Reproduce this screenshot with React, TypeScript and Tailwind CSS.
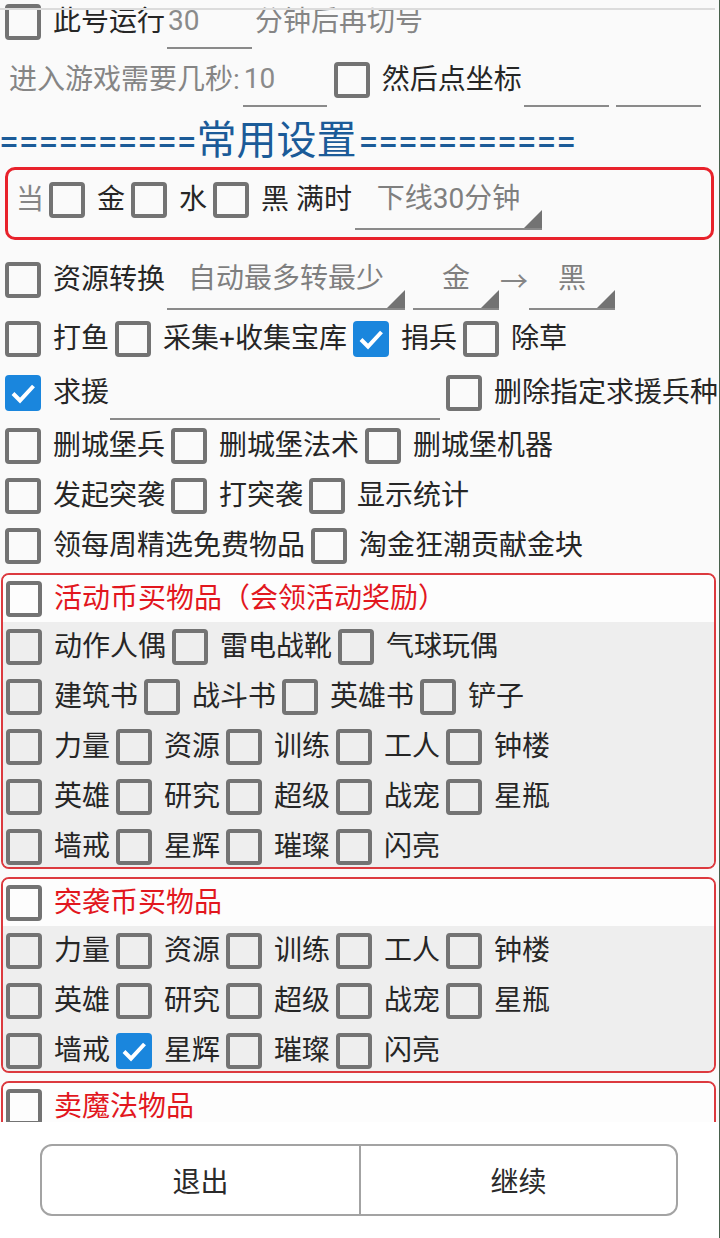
import React from "react";

function Cb({ checked = false, ml = "ml-[6px]" }: { checked?: boolean; ml?: string }) {
  if (checked) {
    return (
      <span className={`${ml} w-[36px] h-[36px] shrink-0 rounded-[4px] bg-[#1a86dd] flex items-center justify-center`}>
        <svg width="36" height="36" viewBox="0 0 36 36">
          <path d="M8 18.5 L15 25.5 L28.5 11" fill="none" stroke="#ffffff" strokeWidth="4" />
        </svg>
      </span>
    );
  }
  return <span className={`${ml} w-[36px] h-[36px] shrink-0 rounded-[4px] border-[4px] border-[#737373] box-border`} />;
}

function Item({ label, checked = false, red = false }: { label: string; checked?: boolean; red?: boolean }) {
  return (
    <div className="flex items-center shrink-0">
      <Cb checked={checked} />
      <span className={`ml-[12px] text-[28px] whitespace-nowrap ${red ? "text-[#e2171e]" : "text-[#262626]"}`}>{label}</span>
    </div>
  );
}

function Edit({ value = "", cls }: { value?: string; cls: string }) {
  return (
    <div className={`h-[54px] shrink-0 border-b-2 border-[#8a8a8a] flex items-center text-[28px] text-[#8a8a8a] ${cls}`}>
      <span className="pl-[1px]">{value}</span>
    </div>
  );
}

function Spinner({ text, cls }: { text: string; cls: string }) {
  return (
    <div className={`relative h-[60px] shrink-0 border-b-2 border-[#8a8a8a] flex items-center justify-center text-[28px] text-[#7f7f7f] whitespace-nowrap ${cls}`}>
      <span>{text}</span>
      <svg className="absolute right-0 bottom-0" width="18" height="18" viewBox="0 0 18 18">
        <polygon points="18,0 18,18 0,18" fill="#737373" />
      </svg>
    </div>
  );
}

function Row({ children, cls = "h-[50px]" }: { children: React.ReactNode; cls?: string }) {
  return <div className={`flex items-center whitespace-nowrap ${cls}`}>{children}</div>;
}

function Section({ title, rows, cls }: { title: string; rows: { label: string; checked?: boolean }[][]; cls: string }) {
  return (
    <div className={`ml-[1px] mr-[3px] border-2 border-[#dc3a3f] rounded-[8px] overflow-hidden shrink-0 ${cls}`}>
      <div className="h-[47px] bg-[#fdfdfd] flex items-center ml-[-3px]">
        <Item label={title} red />
      </div>
      {rows.map((r, i) => (
        <div key={i} className="h-[50px] bg-[#eeeeee] flex items-center ml-[-3px] whitespace-nowrap">
          {r.map((it, j) => (
            <Item key={j} label={it.label} checked={it.checked} />
          ))}
        </div>
      ))}
    </div>
  );
}

const five = (labels: string[], checkedIdx: number = -1) => labels.map((l, i) => ({ label: l, checked: i === checkedIdx }));

export default function App() {
  return (
    <div className="w-[720px] h-[1238px] flex bg-[#fafafa] overflow-hidden font-[Roboto,'Noto_Sans_CJK_SC',sans-serif] leading-none">
      <div className="relative w-[719px] h-full flex flex-col">
        <div className="absolute left-0 top-[8px] h-[2px] w-[715px] bg-[#dcdcdc] z-10" />
        <div className="h-[1122px] shrink-0 overflow-hidden flex flex-col">
          {/* row 1 */}
          <Row cls="h-[58px] mt-[-7px] shrink-0 ml-[-1px]">
            <Cb />
            <span className="ml-[12px] text-[28px] text-[#262626]">此号运行</span>
            <Edit value="30" cls="ml-[2px] w-[85px]" />
            <span className="ml-[3px] text-[28px] text-[#858585]">分钟后再切号</span>
          </Row>
          {/* row 2 */}
          <Row cls="h-[58px] shrink-0">
            <span className="ml-[9px] text-[28px] text-[#858585]">进入游戏需要几秒:</span>
            <Edit value="10" cls="ml-[3px] w-[84px]" />
            <Cb ml="ml-[7px]" />
            <span className="ml-[12px] text-[28px] text-[#262626]">然后点坐标</span>
            <Edit cls="ml-[2px] w-[85px]" />
            <Edit cls="ml-[7px] w-[85px]" />
          </Row>
          {/* title */}
          <div className="h-[58px] shrink-0 flex items-baseline pt-[8px] ml-[-1px] text-[#1b5b98] whitespace-nowrap">
            <span className="text-[36px] font-[Roboto]">==========</span>
            <span className="text-[40px] font-['Noto_Sans_CJK_SC']">常用设置</span>
            <span className="ml-[2px] text-[36px] font-[Roboto]">===========</span>
          </div>
          {/* red box */}
          <div className="h-[73px] shrink-0 ml-[5px] mr-[5px] border-[3px] border-[#e8222b] rounded-[10px] flex items-center pb-[7px] whitespace-nowrap">
            <span className="ml-[8px] text-[28px] text-[#858585]">当</span>
            <Cb ml="ml-[5px]" />
            <span className="ml-[12px] text-[28px] text-[#262626]">金</span>
            <Cb ml="ml-[6px]" />
            <span className="ml-[12px] text-[28px] text-[#262626]">水</span>
            <Cb ml="ml-[6px]" />
            <span className="ml-[12px] text-[28px] text-[#262626]">黑 满时</span>
            <Spinner text="下线30分钟" cls="ml-[3px] w-[187px]" />
          </div>
          {/* resource */}
          <Row cls="h-[60px] mt-[10px] shrink-0 ml-[-1px]">
            <Cb />
            <span className="ml-[12px] text-[28px] text-[#262626]">资源转换</span>
            <Spinner text="自动最多转最少" cls="ml-[2px] w-[238px]" />
            <Spinner text="金" cls="ml-[8px] w-[86px]" />
            <span className="ml-[1px] w-[28px] text-[28px] text-[#858585] mt-[6px]">→</span>
            <Spinner text="黑" cls="ml-[1px] w-[86px]" />
          </Row>
          <Row cls="h-[50px] mt-[4px] shrink-0 ml-[-1px]">
            <Item label="打鱼" />
            <Item label="采集+收集宝库" />
            <Item label="捐兵" checked />
            <Item label="除草" />
          </Row>
          <Row cls="h-[57px] shrink-0 ml-[-1px]">
            <Item label="求援" checked />
            <Edit cls="ml-[1px] w-[330px]" />
            <Item label="删除指定求援兵种" />
          </Row>
          <Row cls="h-[50px] shrink-0 ml-[-1px]">
            <Item label="删城堡兵" />
            <Item label="删城堡法术" />
            <Item label="删城堡机器" />
          </Row>
          <Row cls="h-[50px] shrink-0 ml-[-1px]">
            <Item label="发起突袭" />
            <Item label="打突袭" />
            <Item label="显示统计" />
          </Row>
          <Row cls="h-[50px] shrink-0 ml-[-1px]">
            <Item label="领每周精选免费物品" />
            <Item label="淘金狂潮贡献金块" />
          </Row>
          <Section
            cls="mt-[2px] h-[296px]"
            title="活动币买物品（会领活动奖励）"
            rows={[
              five(["动作人偶", "雷电战靴", "气球玩偶"]),
              five(["建筑书", "战斗书", "英雄书", "铲子"]),
              five(["力量", "资源", "训练", "工人", "钟楼"]),
              five(["英雄", "研究", "超级", "战宠", "星瓶"]),
              five(["墙戒", "星辉", "璀璨", "闪亮"]),
            ]}
          />
          <Section
            cls="mt-[8px] h-[196px]"
            title="突袭币买物品"
            rows={[
              five(["力量", "资源", "训练", "工人", "钟楼"]),
              five(["英雄", "研究", "超级", "战宠", "星瓶"]),
              five(["墙戒", "星辉", "璀璨", "闪亮"], 1),
            ]}
          />
          <Section cls="mt-[8px] h-[120px]" title="卖魔法物品" rows={[]} />
        </div>
        <div className="flex-1 bg-white pt-[22px]">
          <div className="ml-[40px] w-[638px] h-[72px] border-2 border-[#a3a3a3] rounded-[12px] flex text-[28px] text-[#2a2a2a]">
            <div className="w-[317px] flex items-center justify-center pt-[5px]">退出</div>
            <div className="w-[2px] bg-[#a3a3a3]" />
            <div className="flex-1 flex items-center justify-center pt-[5px]">继续</div>
          </div>
        </div>
      </div>
      <div className="w-[1px] h-full bg-[#48604c]" />
    </div>
  );
}
